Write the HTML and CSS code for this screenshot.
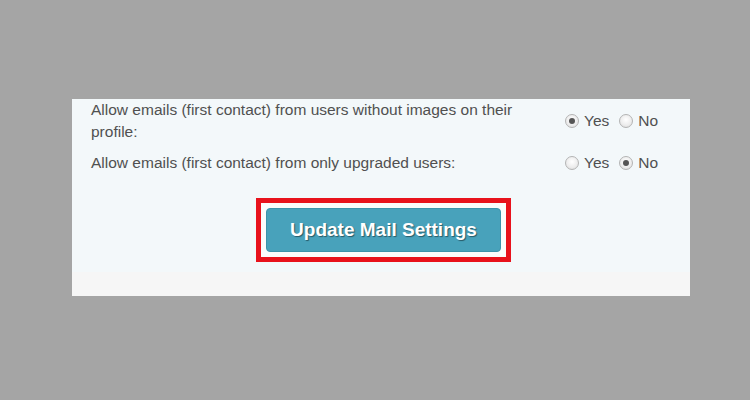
FILE: index.html
```html
<!DOCTYPE html>
<html>
<head>
<meta charset="utf-8">
<link rel="stylesheet" href="styles.css">
</head>
<body>
<div class="frame">
  <div class="panel">
    <div class="settings">
      <div class="label">Allow emails (first contact) from users without images on their profile:</div>
      <div class="options">
        <span class="radio checked"></span><span class="opt">Yes</span>
        <span class="radio"></span><span class="opt">No</span>
      </div>
      <div class="label row2">Allow emails (first contact) from only upgraded users:</div>
      <div class="options row2">
        <span class="radio"></span><span class="opt">Yes</span>
        <span class="radio checked"></span><span class="opt">No</span>
      </div>
    </div>
    <div class="actions">
      <div class="highlight">
        <button class="update">Update Mail Settings</button>
      </div>
    </div>
  </div>
  <div class="footer-strip"></div>
</div>
</body>
</html>
```
FILE: styles.css
```css
html, body {
  margin: 0;
  padding: 0;
}
body {
  background: #a5a5a5;
  width: 750px;
  height: 400px;
  overflow: hidden;
  font-family: "Liberation Sans", Arial, sans-serif;
}
.frame {
  margin-top: 99px;
  margin-left: 72px;
  width: 618px;
}
.panel {
  background: #f3f8fa;
  padding: 0 0 10px 0;
}
.settings {
  display: grid;
  grid-template-columns: 474px auto;
  padding-left: 19px;
  color: #505050;
  font-size: 15.5px;
  line-height: 22px;
}
.label {
  max-width: 440px;
}
.label.row2, .options.row2 {
  margin-top: 9px;
}
.options {
  display: flex;
  align-items: center;
  align-self: center;
}
.radio {
  width: 12px;
  height: 12px;
  border-radius: 50%;
  border: 1px solid #b4b4b4;
  background: radial-gradient(circle at 50% 40%, #ffffff 0%, #ececec 60%, #d6d6d6 100%);
  position: relative;
  box-sizing: content-box;
}
.radio.checked::after {
  content: "";
  position: absolute;
  left: 3px;
  top: 3px;
  width: 6px;
  height: 6px;
  border-radius: 50%;
  background: #555;
}
.opt {
  margin-left: 5px;
  margin-right: 10px;
  font-size: 15.5px;
}
.actions {
  display: flex;
  justify-content: center;
  padding-left: 5px;
  margin-top: 24px;
}
.highlight {
  border: 5px solid #e8121c;
  padding: 5px;
  background: #fbfcfc;
}
.update {
  display: block;
  width: 235px;
  height: 44px;
  border: 1px solid #3d93ab;
  border-radius: 4px;
  background: #48a2bb;
  color: #ffffff;
  font-family: "Liberation Sans", Arial, sans-serif;
  font-weight: bold;
  font-size: 19px;
  text-shadow: 1px 1px 1px rgba(0, 0, 0, 0.45);
  padding: 0;
}
.footer-strip {
  height: 24px;
  background: #f6f6f6;
}
```
